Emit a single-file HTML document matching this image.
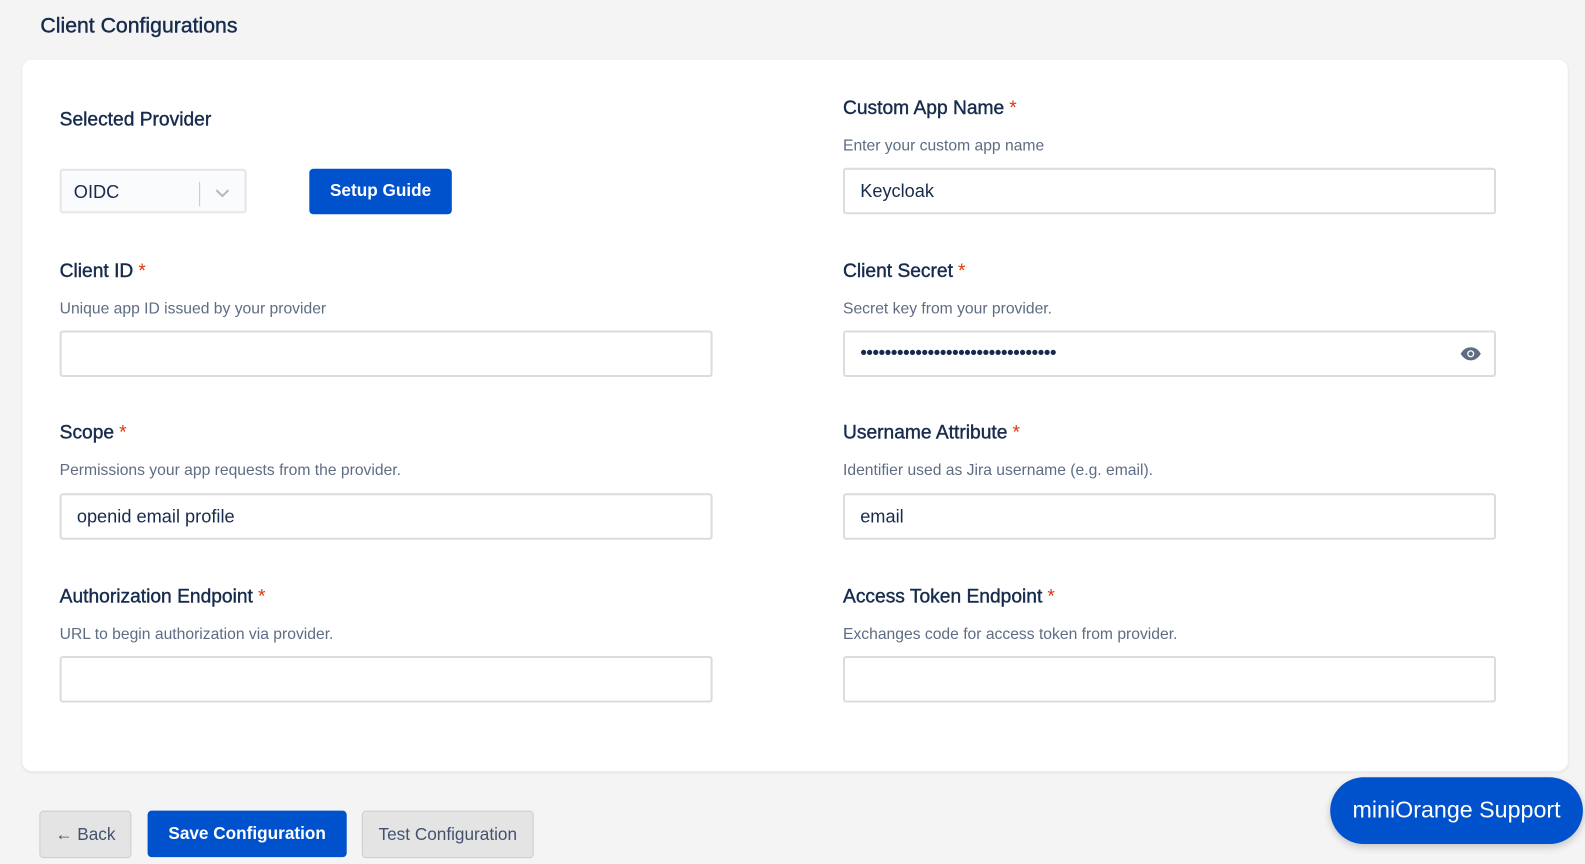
<!DOCTYPE html>
<html><head><meta charset="utf-8"><style>
*{box-sizing:border-box;margin:0;padding:0}
body{width:1585px;height:864px;background:#f4f4f4;font-family:"Liberation Sans",sans-serif;position:relative;overflow:hidden}
#w{position:absolute;left:0;top:0;width:1568px;height:855px;transform:scale(1.0108);transform-origin:0 0}
.a{position:absolute}
.title{left:40px;top:14px;font-size:21px;color:#172b4d;-webkit-text-stroke:0.4px #172b4d}
.card{left:22px;top:59px;width:1529px;height:704px;background:#fff;border-radius:10px;box-shadow:0 1px 3px rgba(0,0,0,.08)}
.lbl{font-size:19px;color:#172b4d;-webkit-text-stroke:0.4px #172b4d}
.lbl .r{color:#de350b;margin-left:5px;-webkit-text-stroke:0}
.hlp{font-size:15.5px;color:#5e6c84}
.inp{width:646px;height:46px;border:2px solid #dcdcdc;border-radius:3px;background:#fff;font-size:18px;color:#172b4d;padding:11px 15px}
.btn{border-radius:4px;font-size:17px;text-align:center;font-weight:bold}
</style></head><body><div id="w">
<div class="a title">Client Configurations</div>
<div class="a card"></div>

<div class="a lbl" style="left:59px;top:108px">Selected Provider</div>
<div class="a" style="left:59px;top:167px;width:185px;height:44px;border:2px solid #e4e6ea;border-radius:3px;background:#fafbfc;font-size:18px;color:#172b4d;padding:11px 12px">OIDC</div>
<div class="a" style="left:197px;top:180px;width:1px;height:24px;background:#c8c8c8"></div>
<svg class="a" style="left:212px;top:186px" width="16" height="10" viewBox="0 0 16 10"><path d="M2 2l6 6 6-6" stroke="#b3b9c4" stroke-width="2" fill="none"/></svg>
<div class="a btn" style="left:306px;top:167px;width:141px;height:45px;background:#0052cc;color:#fff;padding-top:12px">Setup Guide</div>

<div class="a lbl" style="left:834px;top:97px">Custom App Name<span class="r">*</span></div>
<div class="a hlp" style="left:834px;top:136px">Enter your custom app name</div>
<div class="a inp" style="left:834px;top:166px">Keycloak</div>

<div class="a lbl" style="left:59px;top:258px">Client ID<span class="r">*</span></div>
<div class="a hlp" style="left:59px;top:297px">Unique app ID issued by your provider</div>
<div class="a inp" style="left:59px;top:327px"></div>

<div class="a lbl" style="left:834px;top:258px">Client Secret<span class="r">*</span></div>
<div class="a hlp" style="left:834px;top:297px">Secret key from your provider.</div>
<div class="a inp" style="left:834px;top:327px;font-size:19px;letter-spacing:-0.6px;padding-top:10px">••••••••••••••••••••••••••••••••</div>
<svg class="a" style="left:1444px;top:343px" width="22" height="14" viewBox="0 0 22 14"><path d="M1 7C4 2 7.5 0.5 11 0.5S18 2 21 7C18 12 14.5 13.5 11 13.5S4 12 1 7Z" fill="#5e6c84"/><circle cx="11" cy="7" r="3.5" fill="#fff"/><circle cx="11" cy="7" r="2.2" fill="#5e6c84"/></svg>

<div class="a lbl" style="left:59px;top:418px">Scope<span class="r">*</span></div>
<div class="a hlp" style="left:59px;top:457px">Permissions your app requests from the provider.</div>
<div class="a inp" style="left:59px;top:488px">openid email profile</div>

<div class="a lbl" style="left:834px;top:418px">Username Attribute<span class="r">*</span></div>
<div class="a hlp" style="left:834px;top:457px">Identifier used as Jira username (e.g. email).</div>
<div class="a inp" style="left:834px;top:488px">email</div>

<div class="a lbl" style="left:59px;top:580px">Authorization Endpoint<span class="r">*</span></div>
<div class="a hlp" style="left:59px;top:619px">URL to begin authorization via provider.</div>
<div class="a inp" style="left:59px;top:649px"></div>

<div class="a lbl" style="left:834px;top:580px">Access Token Endpoint<span class="r">*</span></div>
<div class="a hlp" style="left:834px;top:619px">Exchanges code for access token from provider.</div>
<div class="a inp" style="left:834px;top:649px"></div>

<div class="a btn" style="left:39px;top:802px;width:91px;height:47px;background:#e4e4e4;border:1px solid #ccc;color:#42526e;font-weight:normal;font-size:17px;padding-top:13px">← Back</div>
<div class="a btn" style="left:146px;top:802px;width:197px;height:46px;background:#0052cc;color:#fff;padding-top:13px">Save Configuration</div>
<div class="a btn" style="left:358px;top:802px;width:170px;height:47px;background:#e4e4e4;border:1px solid #ccc;color:#42526e;font-weight:normal;font-size:17px;padding-top:13px">Test Configuration</div>

<div class="a" style="left:1316px;top:769px;width:250px;height:66px;border-radius:33px;background:#0052cc;color:#fff;font-size:23px;text-align:center;padding-top:19px;box-shadow:0 3px 8px rgba(0,0,0,.2)">miniOrange Support</div>
</div></body></html>
